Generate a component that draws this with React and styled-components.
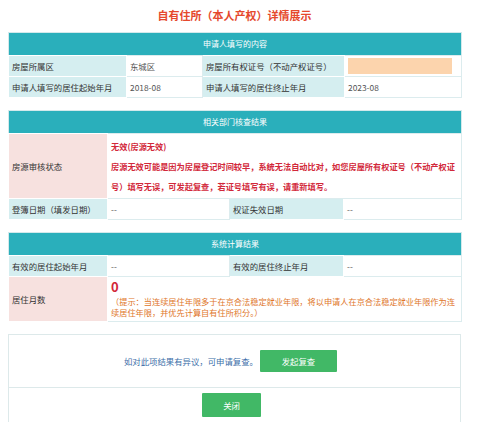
import styled, { createGlobalStyle } from 'styled-components';

const GlobalStyle = createGlobalStyle`
  body {
    margin: 0;
    background: #ffffff;
    font-family: "Noto Sans CJK SC", "Noto Sans", sans-serif;
  }
`;

const Page = styled.div`
  padding: 4px 8px;
  width: 453px;
`;

const Title = styled.h1`
  margin: 0 0 6px;
  height: 22px;
  line-height: 22px;
  text-align: center;
  font-size: 11px;
  font-weight: bold;
  color: #e5482d;
`;

const Table = styled.table`
  width: 453px;
  border-collapse: collapse;
  table-layout: fixed;
  margin-bottom: 12px;
  font-size: 8.4px;
  line-height: 12px;
  border: 1px solid #d3e9eb;
`;

const HeadCell = styled.th`
  height: 22px;
  padding: 0;
  background: #2aafbb;
  color: #ffffff;
  font-weight: normal;
  font-size: 8px;
  text-align: center;
`;

const Label = styled.td`
  height: 20px;
  padding: 0 3px;
  background: ${(props) => (props.$alert ? '#f7e1df' : '#d5eef0')};
  color: #333333;
  border: 1px solid #ffffff;
  white-space: nowrap;
`;

const Value = styled.td`
  height: 20px;
  padding: 0 3px;
  background: #ffffff;
  color: #555555;
  border: 1px solid #dcecee;
`;

const Masked = styled.div`
  height: 16px;
  width: 104px;
  background: #fcd4ad;
`;

const StatusCell = styled.td`
  padding: 2px 2px 2px 3px;
  background: #ffffff;
  border: 1px solid #dcecee;
  color: #d2283a;
  font-size: 8.2px;
  font-weight: bold;
  line-height: 20px;
`;

const MonthsCell = styled.td`
  padding: 1px 3px 3px;
  background: #ffffff;
  border: 1px solid #dcecee;
`;

const Months = styled.div`
  font-size: 13px;
  font-weight: bold;
  line-height: 18px;
  color: #d2283a;
`;

const Hint = styled.div`
  font-size: 8.2px;
  line-height: 11px;
  color: #e0762a;
`;

const ActionBox = styled.div`
  box-sizing: border-box;
  width: 453px;
  height: ${(props) => props.$h}px;
  padding-right: ${(props) => props.$shift || 0}px;
  border: 1px solid #dde9ea;
  border-top: ${(props) => (props.$joined ? 'none' : '1px solid #dde9ea')};
  border-bottom: ${(props) => (props.$open ? 'none' : '1px solid #dde9ea')};
  display: flex;
  justify-content: center;
  align-items: center;
  gap: 2px;
`;

const Note = styled.span`
  font-size: 8.4px;
  color: #3b6ea8;
`;

const GreenButton = styled.button`
  width: ${(props) => props.$w}px;
  height: ${(props) => props.$h}px;
  border: none;
  border-radius: 1px;
  background: #41b866;
  color: #ffffff;
  font-family: inherit;
  font-size: 8.4px;
  padding: 0;
  cursor: pointer;
`;

const Cols = ({ widths }) => (
  <colgroup>
    {widths.map((w, i) => (
      <col key={i} style={{ width: w }} />
    ))}
  </colgroup>
);

const App = () => (
  <Page>
    <GlobalStyle />
    <Title>自有住所（本人产权）详情展示</Title>

    <Table>
      <Cols widths={[118, 76, 142, 117]} />
      <thead>
        <tr>
          <HeadCell colSpan={4}>申请人填写的内容</HeadCell>
        </tr>
      </thead>
      <tbody>
        <tr>
          <Label>房屋所属区</Label>
          <Value>东城区</Value>
          <Label>房屋所有权证号（不动产权证号）</Label>
          <Value>
            <Masked />
          </Value>
        </tr>
        <tr>
          <Label>申请人填写的居住起始年月</Label>
          <Value>2018-08</Value>
          <Label>申请人填写的居住终止年月</Label>
          <Value>2023-08</Value>
        </tr>
      </tbody>
    </Table>

    <Table>
      <Cols widths={[99, 122, 114, 118]} />
      <thead>
        <tr>
          <HeadCell colSpan={4}>相关部门核查结果</HeadCell>
        </tr>
      </thead>
      <tbody>
        <tr>
          <Label $alert>房源审核状态</Label>
          <StatusCell colSpan={3}>
            <div>无效(房源无效)</div>
            <div>
              房源无效可能是因为房屋登记时间较早，系统无法自动比对，如您房屋所有权证号（不动产权证号）填写无误，可发起复查，若证号填写有误，请重新填写。
            </div>
          </StatusCell>
        </tr>
        <tr>
          <Label>登簿日期（填发日期）</Label>
          <Value>--</Value>
          <Label>权证失效日期</Label>
          <Value>--</Value>
        </tr>
      </tbody>
    </Table>

    <Table>
      <Cols widths={[99, 122, 114, 118]} />
      <thead>
        <tr>
          <HeadCell colSpan={4}>系统计算结果</HeadCell>
        </tr>
      </thead>
      <tbody>
        <tr>
          <Label>有效的居住起始年月</Label>
          <Value>--</Value>
          <Label>有效的居住终止年月</Label>
          <Value>--</Value>
        </tr>
        <tr>
          <Label $alert>居住月数</Label>
          <MonthsCell colSpan={3}>
            <Months>0</Months>
            <Hint>
              （提示：当连续居住年限多于在京合法稳定就业年限，将以申请人在京合法稳定就业年限作为连续居住年限，并优先计算自有住所积分。）
            </Hint>
          </MonthsCell>
        </tr>
      </tbody>
    </Table>

    <ActionBox $h={54} $shift={8}>
      <Note>如对此项结果有异议，可申请复查。</Note>
      <GreenButton $w={77} $h={22}>发起复查</GreenButton>
    </ActionBox>
    <ActionBox $h={34} $shift={6} $joined $open>
      <GreenButton $w={59} $h={24}>关闭</GreenButton>
    </ActionBox>
  </Page>
);

export default App;
